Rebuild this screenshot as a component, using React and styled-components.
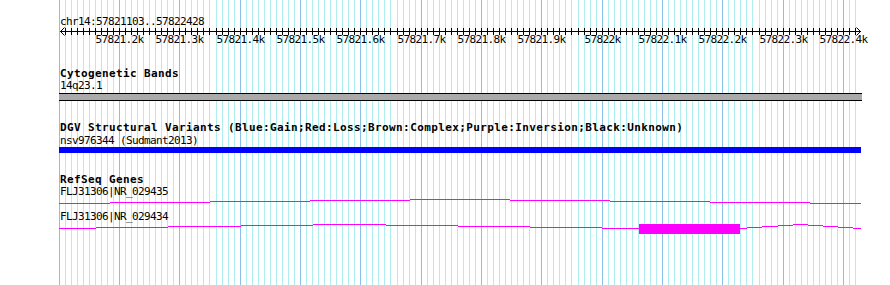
import React from "react";
import styled, { createGlobalStyle } from "styled-components";

const GlobalStyle = createGlobalStyle`
  body {
    margin: 0;
    background: #fff;
    font-family: "DejaVu Sans Mono", monospace;
    color: #000;
  }
`;

const PANEL_LEFT = 59;
const PANEL_WIDTH = 803;
const START = 57821103;
const END = 57822428;

// panel-local x for a base position
const toX = (bp) => Math.round(119 + (bp - 57821200) * 0.60333) - PANEL_LEFT;

const Page = styled.div`
  display: flex;
  height: 285px;
  overflow: hidden;
`;

const Gutter = styled.div`
  width: ${PANEL_LEFT}px;
  flex: none;
`;

const Panel = styled.div`
  position: relative;
  width: ${PANEL_WIDTH}px;
  height: 285px;
  flex: none;
`;

const GridLayer = styled.svg`
  position: absolute;
  top: 0;
  left: 0;
  z-index: 0;
`;

const Tracks = styled.div`
  position: relative;
  z-index: 1;
  display: flex;
  flex-direction: column;
`;

const SmallText = styled.div`
  font-family: "DejaVu Sans Mono", monospace;
  font-size: 11px;
  letter-spacing: -0.62px;
  line-height: ${(p) => p.$lh || 12}px;
  margin-top: ${(p) => p.$mt || 0}px;
  padding-left: 1px;
  white-space: pre;
`;

const TrackTitle = styled.div`
  font-family: "DejaVu Sans Mono", monospace;
  font-weight: bold;
  font-size: 11px;
  letter-spacing: 0.38px;
  line-height: ${(p) => p.$lh || 12}px;
  margin-top: ${(p) => p.$mt || 0}px;
  padding-left: 1px;
  white-space: pre;
`;

const Axis = styled.svg`
  display: block;
  overflow: visible;
`;

const BandBar = styled.div`
  margin-top: 1px;
  width: ${PANEL_WIDTH}px;
  height: 6px;
  background: #aaaaaa;
  border-top: 1px solid #000;
  border-bottom: 1px solid #000;
`;

const VariantBar = styled.div`
  width: ${PANEL_WIDTH - 1}px;
  height: 6px;
  background: ${(p) => p.$color};
`;

const GeneGlyph = styled.svg`
  display: block;
`;

const tens = [];
for (let bp = Math.ceil(START / 10) * 10; bp <= END; bp += 10) tens.push(bp);
const hundreds = tens.filter((bp) => bp % 100 === 0);

const formatK = (bp) => {
  const k = bp / 1000;
  return (Number.isInteger(k) ? k : k.toFixed(1)) + "k";
};

const Grid = () => (
  <GridLayer width={PANEL_WIDTH} height={285} shapeRendering="crispEdges">
    {tens.map((bp) => (
      <rect
        key={bp}
        x={toX(bp)}
        y={0}
        width={1}
        height={285}
        fill={bp % 100 === 0 ? "#87c1e8" : "#afeeee"}
      />
    ))}
    <rect x={0} y={0} width={1} height={285} fill="#87c1e8" />
  </GridLayer>
);

const Ruler = () => (
  <>
    <SmallText $mt={15} $lh={13}>
      chr14:57821103..57822428
    </SmallText>
    <Axis width={PANEL_WIDTH} height={20}>
      <g shapeRendering="crispEdges" fill="#000">
        <rect x={1} y={3} width={801} height={1} />
        {tens.map((bp) => (
          <rect key={bp} x={toX(bp)} y={0} width={1} height={7} />
        ))}
      </g>
      <path d="M5.5 -0.5 L1.5 3.5 L5.5 7.5" fill="none" stroke="#000" strokeWidth="1" />
      <path d="M797.5 -0.5 L801.5 3.5 L797.5 7.5" fill="none" stroke="#000" strokeWidth="1" />
      {hundreds.map((bp) => (
        <text
          key={bp}
          x={toX(bp) + 0.5}
          y={15.3}
          textAnchor="middle"
          fontFamily='"DejaVu Sans Mono", monospace'
          fontSize="11"
          letterSpacing="-0.62"
        >
          {formatK(bp)}
        </text>
      ))}
    </Axis>
  </>
);

const gene1 = [
  [59, 110, 203], [110, 210, 202], [210, 310, 201], [310, 410, 200],
  [410, 510, 199], [510, 610, 200], [610, 710, 201], [710, 810, 202],
  [810, 861, 203],
];

const gene2 = [
  [59, 96, 228], [96, 168, 227], [168, 241, 226], [241, 313, 225],
  [313, 386, 224], [386, 458, 225], [458, 530, 226], [530, 602, 227],
  [602, 639, 228], [740, 747, 228], [747, 762, 227], [762, 778, 226],
  [778, 793, 225], [793, 808, 224], [808, 823, 225], [823, 838, 226],
  [838, 853, 227], [853, 861, 228],
];

const Gene = ({ segments, top, height, exons = [] }) => (
  <GeneGlyph width={PANEL_WIDTH} height={height} shapeRendering="crispEdges">
    {segments.map(([x1, x2, y]) => (
      <rect
        key={x1}
        x={x1 - PANEL_LEFT}
        y={y - top}
        width={x2 - x1}
        height={1}
        fill="#ff00ff"
      />
    ))}
    {exons.map(([x1, x2, y1, y2]) => (
      <rect
        key={x1}
        x={x1 - PANEL_LEFT}
        y={y1 - top}
        width={x2 - x1}
        height={y2 - y1}
        fill="#ff00ff"
      />
    ))}
  </GeneGlyph>
);

export default function App() {
  return (
    <Page>
      <GlobalStyle />
      <Gutter />
      <Panel>
        <Grid />
        <Tracks>
          <Ruler />

          <TrackTitle $mt={20}>Cytogenetic Bands</TrackTitle>
          <SmallText>14q23.1</SmallText>
          <BandBar />

          <TrackTitle $mt={21}>
            DGV Structural Variants (Blue:Gain;Red:Loss;Brown:Complex;Purple:Inversion;Black:Unknown)
          </TrackTitle>
          <SmallText $mt={1}>nsv976344 (Sudmant2013)</SmallText>
          <VariantBar $color="#0000ff" />

          <TrackTitle $mt={21}>RefSeq Genes</TrackTitle>
          <SmallText>FLJ31306|NR_029435</SmallText>
          <Gene segments={gene1} top={198} height={13} />
          <SmallText>FLJ31306|NR_029434</SmallText>
          <Gene segments={gene2} top={223} height={12} exons={[[639, 740, 224, 234]]} />
        </Tracks>
      </Panel>
    </Page>
  );
}
